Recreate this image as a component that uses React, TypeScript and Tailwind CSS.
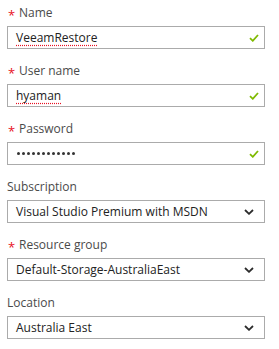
import React from 'react';

interface FieldProps {
  label: string;
  required?: boolean;
  children: React.ReactNode;
}

const Field: React.FC<FieldProps> = ({ label, required, children }) => (
  <div className="mb-[12px]">
    <div className="flex items-center h-[20px] mb-[3px] text-[12px] text-[#4a4a4a]">
      {required && (
        <span className="text-[#e81123] text-[13px] w-[12px] pl-[1px] leading-none self-start mt-[6px]">*</span>
      )}
      <span>{label}</span>
    </div>
    {children}
  </div>
);

const Check = () => (
  <svg width="10" height="8" viewBox="0 0 10 8" className="shrink-0">
    <path d="M1 4.2 L3.8 6.8 L9 1" fill="none" stroke="#7fba00" strokeWidth="1.8" />
  </svg>
);

const Chevron = () => (
  <svg width="10" height="6" viewBox="0 0 10 6" className="shrink-0">
    <path d="M1 1 L5 4.8 L9 1" fill="none" stroke="#2b2b2b" strokeWidth="1.8" />
  </svg>
);

const TextBox: React.FC<{ value: React.ReactNode; spell?: boolean }> = ({ value, spell }) => (
  <div className="h-[23px] border border-[#ababab] bg-white flex items-center pl-[8px] pr-[5px] text-[12px] text-[#222]">
    <span
      className={
        'flex-1 ' +
        (spell ? 'underline decoration-dotted decoration-[#e81123] underline-offset-[3px]' : '')
      }
    >
      {value}
    </span>
    <Check />
  </div>
);

const DropDown: React.FC<{ value: string }> = ({ value }) => (
  <div className="h-[23px] border border-[#ababab] bg-white flex items-center pl-[8px] pr-[10px] text-[12px] text-[#222]">
    <span className="flex-1">{value}</span>
    <Chevron />
  </div>
);

export default function App() {
  return (
    <div
      className="w-[279px] h-[349px] bg-white px-[7px] pt-[3px] pr-[14px]"
      style={{ fontFamily: '"Open Sans", "Noto Sans", sans-serif' }}
    >
      <Field label="Name" required>
        <TextBox value="VeeamRestore" spell />
      </Field>
      <Field label="User name" required>
        <TextBox value="hyaman" spell />
      </Field>
      <Field label="Password" required>
        <TextBox
          value={
            <span className="flex gap-[2.5px] pl-[1px]">
              {Array.from({ length: 12 }).map((_, i) => (
                <span key={i} className="w-[2.5px] h-[2.5px] rounded-full bg-[#333] inline-block" />
              ))}
            </span>
          }
        />
      </Field>
      <Field label="Subscription">
        <DropDown value="Visual Studio Premium with MSDN" />
      </Field>
      <Field label="Resource group" required>
        <DropDown value="Default-Storage-AustraliaEast" />
      </Field>
      <Field label="Location">
        <DropDown value="Australia East" />
      </Field>
    </div>
  );
}
